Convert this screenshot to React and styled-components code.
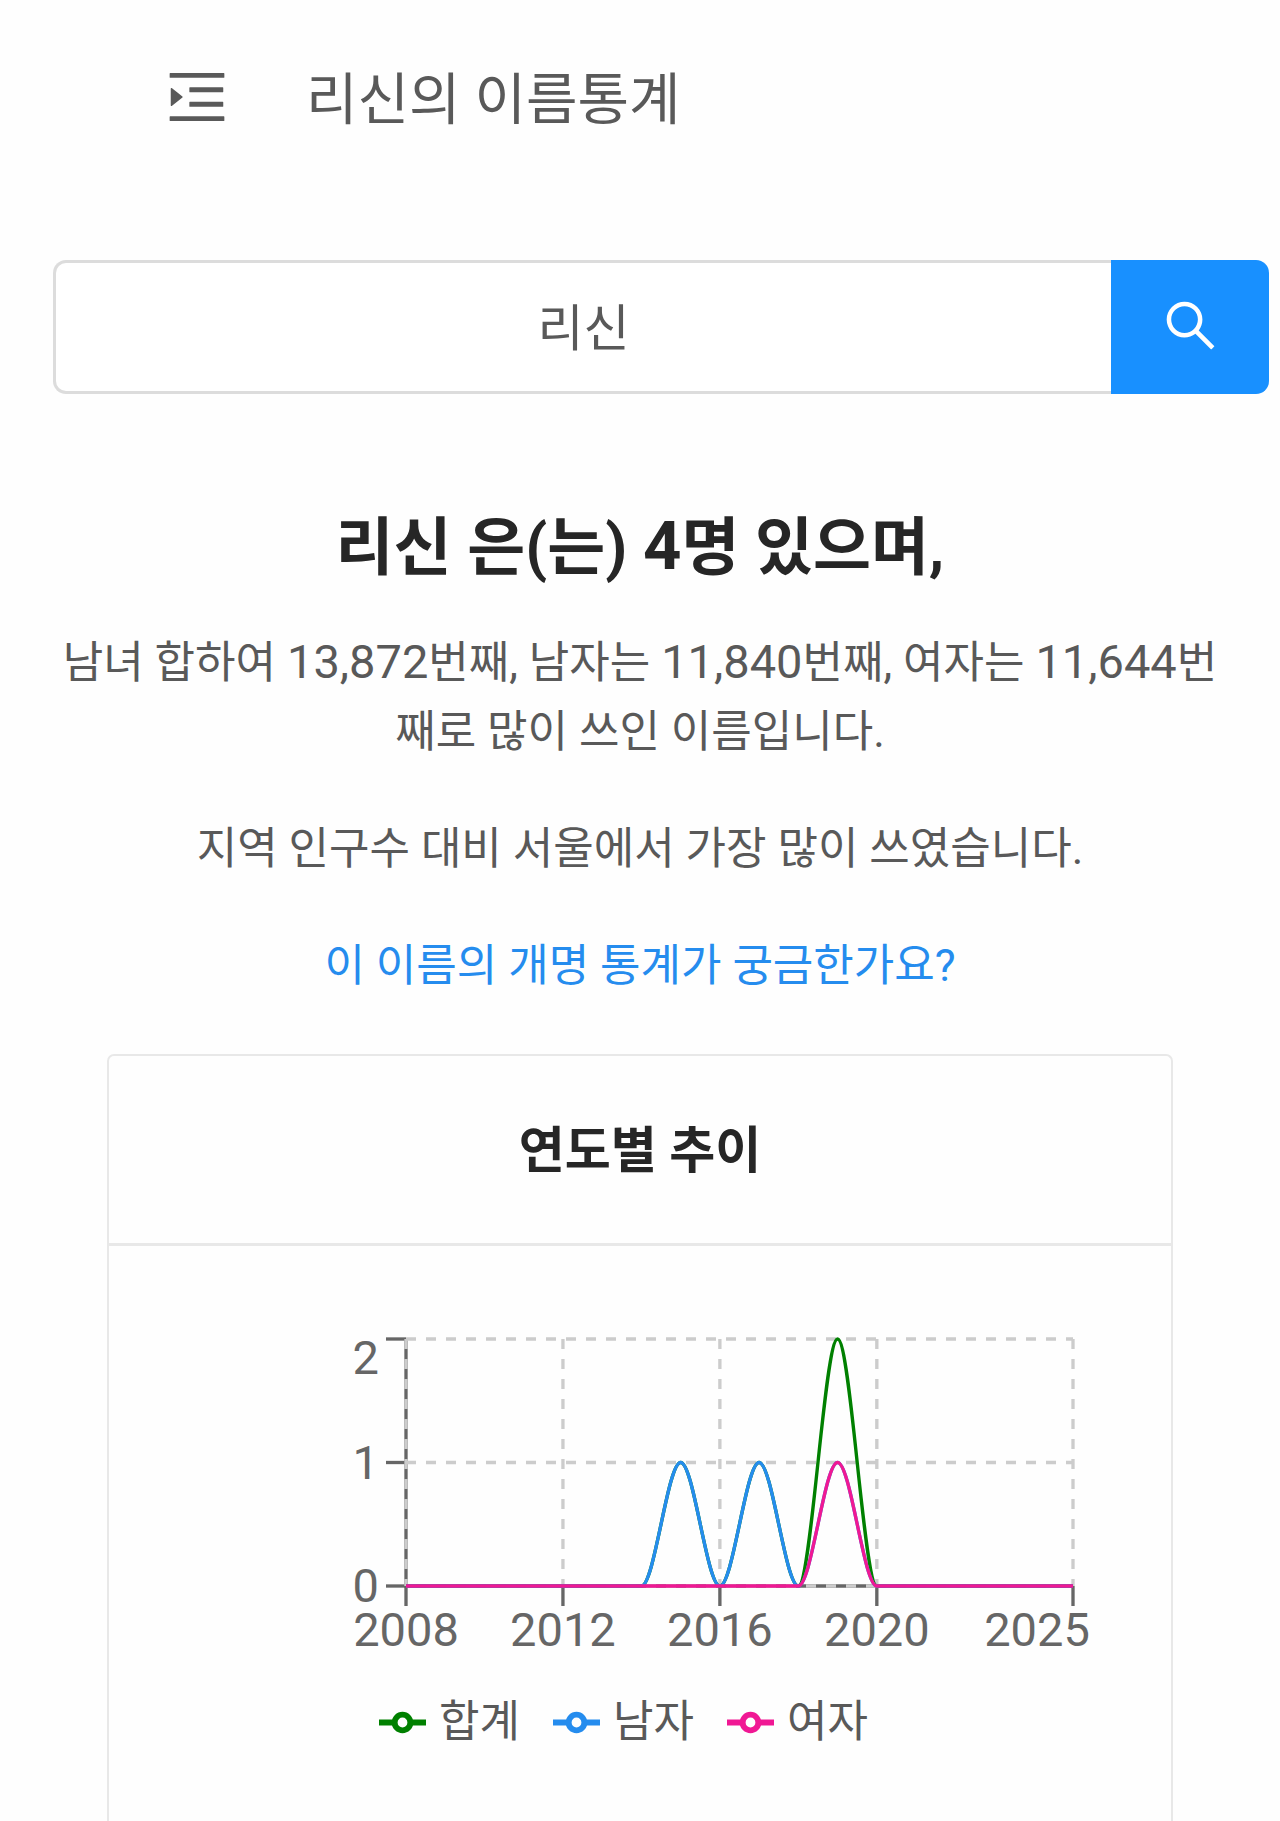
import React, { useState } from "react";
import styled, { createGlobalStyle } from "styled-components";
import { AiOutlineMenuUnfold, AiOutlineSearch } from "react-icons/ai";

const GlobalStyle = createGlobalStyle`
  * {
    box-sizing: border-box;
  }
  body {
    margin: 0;
    background: #fefefe;
    color: #595959;
    font-family: Roboto, "Noto Sans CJK KR", sans-serif;
    font-size: 44px;
    line-height: 69px;
  }
`;

const Wrapper = styled.div`
  display: flex;
  flex-direction: column;
  min-height: 100vh;
`;

const Header = styled.header`
  display: flex;
  align-items: center;
  gap: 74px;
  height: 194px;
  padding: 0 162px;
`;

const MenuButton = styled.button`
  display: flex;
  padding: 0;
  border: 0;
  background: none;
  color: inherit;
  font-size: 70px;
`;

const HeaderTitle = styled.h1`
  margin: 0;
  padding-top: 6px;
  font-size: 56px;
  font-weight: 400;
`;

const SearchForm = styled.form`
  display: flex;
  height: 134px;
  margin: 66px 11px 0 53px;
`;

const SearchInput = styled.input`
  flex: 1;
  min-width: 0;
  padding: 0 36px 7px;
  border: 3px solid #dcdcdc;
  border-right: 0;
  border-radius: 13px 0 0 13px;
  background: #fff;
  color: inherit;
  font-family: inherit;
  font-size: 50px;
  text-align: center;
`;

const SearchButton = styled.button`
  display: flex;
  align-items: center;
  justify-content: center;
  width: 158px;
  padding: 0 0 4px;
  border: 0;
  border-radius: 0 13px 13px 0;
  background: #1890ff;
  color: #fff;
  font-size: 61px;
`;

const Summary = styled.section`
  display: flex;
  flex-direction: column;
  gap: 48px;
  padding: 107px 53px 0;
  text-align: center;
`;

const SummaryTitle = styled.h2`
  margin: 0 0 -13px;
  color: #262626;
  font-size: 63px;
  font-weight: 700;
  line-height: 93px;
`;

const Text = styled.p`
  margin: 0;
`;

const Num = styled.span`
  font-size: ${props => (props.$large ? "67px" : "47px")};
  line-height: 1;
`;

const Link = styled.a`
  color: #258cee;
  text-decoration: none;
`;

const Card = styled.section`
  display: flex;
  flex: 1;
  flex-direction: column;
  margin: 53px 107px 0;
  border: 2px solid #e8e8e8;
  border-bottom: 0;
  border-radius: 7px 7px 0 0;
`;

const CardTitle = styled.h3`
  margin: 0;
  padding: 60px 0 57px;
  border-bottom: 3px solid #e8e8e8;
  color: #262626;
  font-size: 50px;
  font-weight: 700;
  line-height: 70px;
  text-align: center;
`;

const CardBody = styled.div`
  padding: 76px 80px;
`;

const Chart = styled.svg`
  display: block;
  width: 100%;
`;

const TickLabel = styled.text`
  fill: #666;
  font-size: 47px;
`;

const Legend = styled.ul`
  display: flex;
  justify-content: center;
  margin: 22px 0 0;
  padding: 0;
  list-style: none;
`;

const LegendItem = styled.li`
  display: flex;
  align-items: center;
  gap: 13px;
  margin-right: 33px;
`;

const FIRST_YEAR = 2008;
const LAST_YEAR = 2025;
const PLOT = { left: 217, right: 884, top: 17, bottom: 264 };

const xOf = year =>
  PLOT.left + ((year - FIRST_YEAR) * (PLOT.right - PLOT.left)) / (LAST_YEAR - FIRST_YEAR);
const yOf = value => PLOT.bottom - (value * (PLOT.bottom - PLOT.top)) / 2;

const series = [
  { name: "합계", color: "#008000", counts: { 2015: 1, 2017: 1, 2019: 2 } },
  { name: "남자", color: "#258cee", counts: { 2015: 1, 2017: 1, 2019: 1 } },
  { name: "여자", color: "#f01894", counts: { 2019: 1 } }
];

const xTicks = [
  { year: 2008 },
  { year: 2012 },
  { year: 2016 },
  { year: 2020 },
  { year: 2025, labelX: 848 }
];

const yTicks = [
  { value: 0, labelY: 280 },
  { value: 1, labelY: 157 },
  { value: 2, labelY: 52 }
];

// every point is a local extreme or lies on the flat zero line, so tangents stay horizontal
const linePath = counts => {
  const step = xOf(FIRST_YEAR + 1) - xOf(FIRST_YEAR);
  let d = `M${xOf(FIRST_YEAR)},${yOf(counts[FIRST_YEAR] || 0)}`;
  for (let year = FIRST_YEAR + 1; year <= LAST_YEAR; year++) {
    const x = xOf(year);
    const y = yOf(counts[year] || 0);
    const prevY = yOf(counts[year - 1] || 0);
    d += `C${x - (step * 2) / 3},${prevY},${x - step / 3},${y},${x},${y}`;
  }
  return d;
};

const YearChart = () => (
  <Chart viewBox="0 0 902 344" role="img" aria-label="연도별 추이">
    <g stroke="#666" strokeWidth="3.33">
      <path d={`M${PLOT.left},${PLOT.top}V${PLOT.bottom}H${PLOT.right}`} fill="none" />
      {xTicks.map(({ year }) => (
        <path key={year} d={`M${xOf(year)},${PLOT.bottom}v20`} />
      ))}
      {yTicks.map(({ value }) => (
        <path key={value} d={`M${PLOT.left},${yOf(value)}h-20`} />
      ))}
    </g>
    <g stroke="#ccc" strokeWidth="3.33" strokeDasharray="10 10">
      {yTicks.map(({ value }) => (
        <path key={value} d={`M${PLOT.left},${yOf(value)}H${PLOT.right}`} />
      ))}
      {xTicks.map(({ year }) => (
        <path key={year} d={`M${xOf(year)},${PLOT.top}V${PLOT.bottom}`} />
      ))}
    </g>
    {xTicks.map(({ year, labelX }) => (
      <TickLabel key={year} x={labelX || xOf(year)} y="324" textAnchor="middle">
        {year}
      </TickLabel>
    ))}
    {yTicks.map(({ value, labelY }) => (
      <TickLabel key={value} x="190" y={labelY} textAnchor="end">
        {value}
      </TickLabel>
    ))}
    {series.map(({ name, color, counts }) => (
      <path key={name} d={linePath(counts)} fill="none" stroke={color} strokeWidth="3.33" />
    ))}
  </Chart>
);

const LegendIcon = ({ color }) => (
  <svg width="47" height="47" viewBox="0 0 32 32" fill="none" stroke={color} strokeWidth="4">
    <path d="M0,16h10.67M21.33,16H32" />
    <circle cx="16" cy="16" r="5.33" />
  </svg>
);

const App = () => {
  const [name, setName] = useState("리신");
  return (
    <Wrapper>
      <GlobalStyle />
      <Header>
        <MenuButton type="button" aria-label="메뉴">
          <AiOutlineMenuUnfold />
        </MenuButton>
        <HeaderTitle>리신의 이름통계</HeaderTitle>
      </Header>
      <SearchForm onSubmit={e => e.preventDefault()}>
        <SearchInput aria-label="이름" value={name} onChange={e => setName(e.target.value)} />
        <SearchButton type="submit" aria-label="검색">
          <AiOutlineSearch />
        </SearchButton>
      </SearchForm>
      <Summary>
        <SummaryTitle>
          리신 은(는) <Num $large>4</Num>명 있으며,
        </SummaryTitle>
        <Text>
          남녀 합하여 <Num>13,872</Num>번째, 남자는 <Num>11,840</Num>번째, 여자는{" "}
          <Num>11,644</Num>번<wbr />째로 많이 쓰인 이름입니다.
        </Text>
        <Text>지역 인구수 대비 서울에서 가장 많이 쓰였습니다.</Text>
        <Text>
          <Link href="#rename">이 이름의 개명 통계가 궁금한가요?</Link>
        </Text>
      </Summary>
      <Card>
        <CardTitle>연도별 추이</CardTitle>
        <CardBody>
          <YearChart />
          <Legend>
            {series.map(item => (
              <LegendItem key={item.name}>
                <LegendIcon color={item.color} />
                {item.name}
              </LegendItem>
            ))}
          </Legend>
        </CardBody>
      </Card>
    </Wrapper>
  );
};

export default App;
